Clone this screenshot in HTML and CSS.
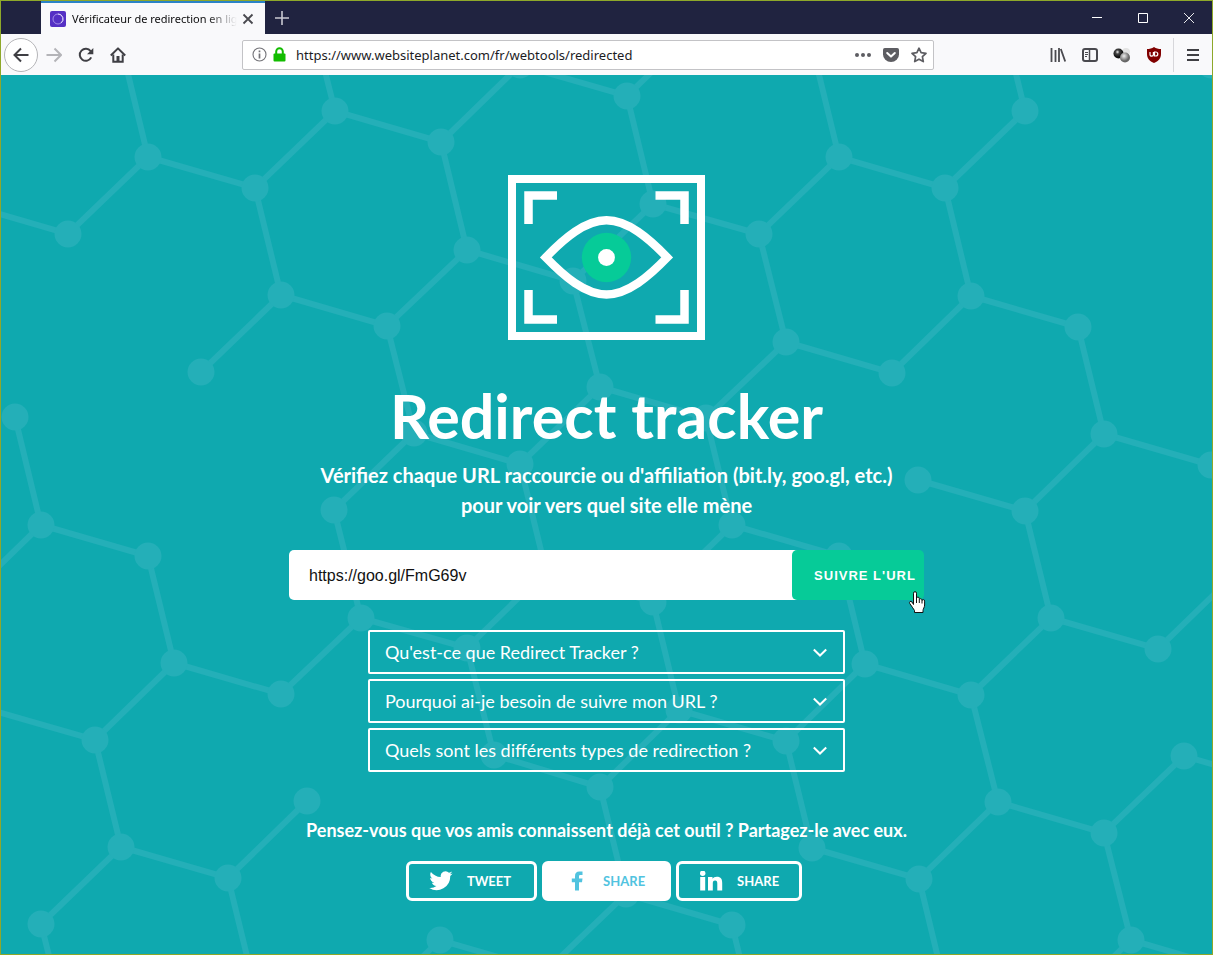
FILE: index.html
```html
<!DOCTYPE html>
<html lang="fr">
<head>
    <meta charset="UTF-8">
    <meta name="viewport" content="width=device-width, initial-scale=1.0">
    <title>Vérificateur de redirection en ligne</title>
    <link rel="stylesheet" href="styles.css">
</head>
<body>
    <div class="window">
        <div class="titlebar">
            <div class="tab">
                <svg class="favicon" width="16" height="16" viewBox="0 0 16 16">
                    <rect width="16" height="16" rx="2" fill="#5530c4"/>
                    <circle cx="8" cy="8" r="5" fill="none" stroke="#a48ce8" stroke-width="1"/>
                    <path d="M8 3a5 5 0 0 1 3 9" fill="none" stroke="#ddd4fa" stroke-width="1"/>
                </svg>
                <span class="tab-title">Vérificateur de redirection en ligne</span>
                <button class="tab-close" aria-label="Fermer l'onglet">
                    <svg width="12" height="12" viewBox="0 0 12 12"><path d="M1.500 1.500l9 9m0-9l-9 9" stroke="#4a4a4f" stroke-width="1.800"/></svg>
                </button>
            </div>
            <button class="new-tab" aria-label="Nouvel onglet">
                <svg width="14" height="14" viewBox="0 0 14 14"><path d="M7 0v14M0 7h14" stroke="#c9c9d1" stroke-width="1.600"/></svg>
            </button>
            <div class="window-controls">
                <button aria-label="Réduire"><svg width="12" height="12" viewBox="0 0 12 12"><path d="M1 5.500h10" stroke="#fff"/></svg></button>
                <button aria-label="Agrandir"><svg width="12" height="12" viewBox="0 0 12 12"><path d="M1.500 1.500h9v9h-9z" fill="none" stroke="#fff"/></svg></button>
                <button aria-label="Fermer"><svg width="12" height="12" viewBox="0 0 12 12"><path d="M1 1l10 10M11 1L1 11" stroke="#fff" stroke-width="0.900"/></svg></button>
            </div>
        </div>

        <div class="toolbar">
            <div class="nav-buttons">
                <button class="back" aria-label="Précédent">
                    <svg width="16" height="16" viewBox="0 0 16 16" fill="none" stroke="#3f3f44" stroke-width="2"><path d="M15.500 8H2M8 1.500L1.500 8 8 14.500"/></svg>
                </button>
                <button aria-label="Suivant">
                    <svg width="16" height="16" viewBox="0 0 16 16" fill="none" stroke="#b4b4b8" stroke-width="2"><path d="M.5 8H14M8.500 1.500L15 8l-6.500 6.500"/></svg>
                </button>
                <button aria-label="Actualiser">
                    <svg width="16" height="16" viewBox="0 0 16 16"><path d="M13.200 10.400A6 6 0 1 1 12.600 4.200" fill="none" stroke="#3f3f44" stroke-width="2"/><path d="M15.300 1v6.300H9z" fill="#3f3f44"/></svg>
                </button>
                <button aria-label="Accueil">
                    <svg width="16" height="16" viewBox="0 0 16 16" fill="none" stroke="#3f3f44" stroke-width="2"><path d="M.8 8.500L8 1.400l7.200 7.100" stroke-linejoin="round"/><path d="M3.300 7.500v7.300h9.400V7.500"/><path d="M8 9v6" stroke-width="3"/></svg>
                </button>
            </div>
            <div class="url-bar">
                <svg width="15" height="15" viewBox="0 0 15 15"><circle cx="7.500" cy="7.500" r="6.500" fill="none" stroke="#737378" stroke-width="1.100"/><path d="M7.500 3.500v1.800M7.500 6.500V11.500" stroke="#737378" stroke-width="1.700"/></svg>
                <svg width="13" height="15" viewBox="0 0 13 15"><rect x=".5" y="6.500" width="12" height="8" rx="1" fill="#12bc00"/><path d="M3.200 7.500V4.500a3.300 3.300 0 0 1 6.600 0v3" fill="none" stroke="#12bc00" stroke-width="2"/></svg>
                <input class="url-input" type="text" aria-label="Adresse" value="https://www.websiteplanet.com/fr/webtools/redirected">
                <button aria-label="Actions de la page">
                    <svg width="16" height="16" viewBox="0 0 16 16" fill="#5d5d62"><circle cx="2" cy="8" r="2"/><circle cx="8" cy="8" r="2"/><circle cx="14" cy="8" r="2"/></svg>
                </button>
                <button aria-label="Pocket">
                    <svg width="16" height="16" viewBox="0 0 16 16"><path d="M1.800 1h12.400q1.800 0 1.800 1.800V7.500a8 7.500 0 0 1-16 0V2.800Q0 1 1.800 1z" fill="#5d5d62"/><path d="M4.200 6L8 9.600 11.800 6" fill="none" stroke="#fff" stroke-width="2" stroke-linecap="round" stroke-linejoin="round"/></svg>
                </button>
                <button aria-label="Marque-page">
                    <svg width="16" height="16" viewBox="0 0 16 16"><path d="M8 1.200l2.100 4.500 4.900.6-3.600 3.400.9 4.900L8 12.200l-4.300 2.400.9-4.900L1 6.300l4.900-.6z" fill="none" stroke="#5d5d62" stroke-width="1.700" stroke-linejoin="round"/></svg>
                </button>
            </div>
            <div class="tools">
                <button aria-label="Bibliothèque">
                    <svg width="16" height="16" viewBox="0 0 16 16" stroke="#4a4a4f" stroke-width="1.800"><path d="M1.500 1v14M5.500 3v12M9 1v14M10.800 2L15.200 14.500" fill="none"/></svg>
                </button>
                <button aria-label="Panneaux latéraux">
                    <svg width="16" height="14" viewBox="0 0 16 14" fill="none" stroke="#4a4a4f"><rect x="1" y="1" width="14" height="12" rx="2" stroke-width="2"/><path d="M7.500 1v12" stroke-width="1.500"/><path d="M3 4.500h3M3 6.500h3M3 8.500h2"/></svg>
                </button>
                <button aria-label="Extension">
                    <svg width="18" height="16" viewBox="0 0 18 16">
                        <defs>
                            <radialGradient id="dark" cx=".4" cy=".35"><stop offset="0" stop-color="#eee"/><stop offset=".4" stop-color="#444"/><stop offset="1" stop-color="#111"/></radialGradient>
                            <radialGradient id="grey" cx=".4" cy=".35"><stop offset="0" stop-color="#eee"/><stop offset="1" stop-color="#666"/></radialGradient>
                        </defs>
                        <circle cx="13" cy="5" r="4" fill="#e3e3e3"/>
                        <circle cx="5.500" cy="6.500" r="5" fill="url(#dark)"/>
                        <circle cx="12" cy="10.500" r="5" fill="url(#grey)"/>
                    </svg>
                </button>
                <button aria-label="uBlock Origin">
                    <svg width="16" height="16" viewBox="0 0 16 16"><path d="M8 0c2 1.500 4.500 2 7 2v5c0 4.500-2.500 7-7 9-4.500-2-7-4.500-7-9V2c2.500 0 5-.5 7-2z" fill="#800000"/><path d="M4 5v2.500a1.700 1.700 0 0 0 3.400 0V5M8.500 5v4h1.300a2 2 0 0 0 0-4z" fill="none" stroke="#fff" stroke-width="1.200"/></svg>
                </button>
                <button class="menu" aria-label="Menu">
                    <svg width="14" height="14" viewBox="0 0 14 14"><path d="M1 2h12M1 7h12M1 12h12" stroke="#3f3f44" stroke-width="2"/></svg>
                </button>
            </div>
        </div>

        <main class="hero">
            <!-- molecule pattern -->
            <svg class="pattern" viewBox="1 75 1211 879" preserveAspectRatio="xMidYMin slice" aria-hidden="true">
                <g fill="none" stroke="#24afb8" stroke-width="6">
                    <path d="M122 49L148 157 255 188 335 111 441 142 467 250 387 326 281 295 255 188M308 4L335 111M148 157L68 234-38 203M441 142L520 65 627 96 706 19M627 96L653 204 759 234M653 204L573 281 467 250M281 295L201 372"/>
                    <path d="M387 326L414 433 334 510 361 618 467 648 546 571 520 464 414 433M573 281L600 387 520 464M600 387L706 418 786 342 759 234 839 157 945 188 971 296 892 373 786 342M813 50L839 157M945 188L1025 111 999 4M971 296L1078 327 1104 434 1025 511 918 480M1104 434L1211 465"/>
                    <path d="M15 417L41 525-38 602M41 525L148 556 174 663 281 694 361 618M174 663L95 740-12 709M95 740L121 847 228 878 307 801M121 847L41 924 68 1031M228 878L254 985"/>
                    <path d="M546 571L653 602 732 525 706 418M732 525L839 556 865 664 786 741 679 710 653 602M467 648L494 755 600 787 679 710M600 787L626 894 732 925 758 1032M626 894L546 971 440 940 360 1017M786 741L812 848 919 879 998 802 971 695 865 664M971 695L1051 618 1025 511M1051 618L1158 649 1237 572M998 802L1104 833 1184 756 1290 787M1104 833L1131 940 1237 971M1131 940L1051 1017M919 879L945 987"/>
                </g>
                <!-- zero-length round caps draw the atoms -->
                <path fill="none" stroke="#24afb8" stroke-width="27" stroke-linecap="round" d="M148 157h0M68 234h0M255 188h0M335 111h0M441 142h0M467 250h0M281 295h0M387 326h0M201 372h0M15 417h0M41 525h0M148 556h0M174 663h0M281 694h0M95 740h0M121 847h0M228 878h0M41 924h0M307 801h0M361 618h0M334 510h0M414 433h0M520 464h0M467 648h0M494 755h0M600 787h0M520 65h0M627 96h0M653 204h0M759 234h0M573 281h0M600 387h0M706 418h0M546 571h0M653 602h0M732 525h0M679 710h0M786 741h0M839 556h0M865 664h0M971 695h0M812 848h0M919 879h0M998 802h0M1051 618h0M1025 511h0M918 480h0M1158 649h0M1104 833h0M1184 756h0M1131 940h0M1104 434h0M1211 465h0M1078 327h0M971 296h0M892 373h0M786 342h0M839 157h0M945 188h0M1025 111h0M626 894h0M732 925h0M440 940h0M1211 65h0"/>
            </svg>

            <div class="content">
                <svg class="eye" width="197" height="165" viewBox="0 0 197 165" fill="none" stroke="#fff" aria-hidden="true">
                    <rect x="4" y="4" width="189" height="157" stroke-width="8"/>
                    <path d="M20.500 49V20.500H49M147.500 20.500H176.500V49M20.500 115V144.500H49M147.500 144.500H176.500V115" stroke-width="8.500"/>
                    <circle cx="98.500" cy="82.500" r="24.700" fill="#06cb98" stroke="none"/>
                    <circle cx="98.500" cy="82.500" r="8.400" fill="#fff" stroke="none"/>
                    <path d="M37.800 82.400C56 63.500 77 45.300 98.500 45.300S141 63.500 159.200 82.400C141 101.300 120 119.500 98.500 119.500S56 101.300 37.800 82.400z" stroke-width="8.500"/>
                </svg>
                <h1>Redirect tracker</h1>
                <p class="subtitle">Vérifiez chaque URL raccourcie ou d'affiliation (bit.ly, goo.gl, etc.)<br>pour voir vers quel site elle mène</p>

                <form class="track-form" onsubmit="return false">
                    <input type="text" aria-label="URL à suivre" value="https://goo.gl/FmG69v">
                    <button type="submit">SUIVRE L'URL</button>
                    <svg class="cursor" width="18" height="23" viewBox="0 0 18 23" aria-hidden="true"><path d="M5.500 13.500V2.200a1.500 1.500 0 0 1 3 0V8.200V7.500a1.400 1.400 0 0 1 2.800 0v1.200a1.400 1.400 0 0 1 2.700.2v.9a1.300 1.300 0 0 1 2.600.3V14c0 2.500-1.600 3.800-1.600 5.500v2H6.500v-2C5.200 17.500 3.500 15 1.800 12.600.7 10.800 2.700 9.600 4 11zM8.500 8v4M11.300 9v3M14 10v2.500" fill="#fff" stroke="#111"/></svg>
                </form>

                <div class="faq">
                    <button aria-expanded="false"><span>Qu'est-ce que Redirect Tracker ?</span><svg width="14" height="9" viewBox="0 0 14 9"><path d="M.8 1.500L7 7.500l6.200-6"/></svg></button>
                    <button aria-expanded="false"><span>Pourquoi ai-je besoin de suivre mon URL ?</span><svg width="14" height="9" viewBox="0 0 14 9"><path d="M.8 1.500L7 7.500l6.200-6"/></svg></button>
                    <button aria-expanded="false"><span>Quels sont les différents types de redirection ?</span><svg width="14" height="9" viewBox="0 0 14 9"><path d="M.8 1.500L7 7.500l6.200-6"/></svg></button>
                </div>

                <p class="share-text">Pensez-vous que vos amis connaissent déjà cet outil ? Partagez-le avec eux.</p>
                <div class="share">
                    <a href="#">
                        <svg width="24" height="20" viewBox="0 0 24 20"><path d="M23.600 2.400c-.9.400-1.800.6-2.700.8 1-.6 1.700-1.500 2.100-2.600-.9.500-1.900.9-3 1.200a4.800 4.800 0 0 0-8.200 4.300C7.800 5.900 4.300 4 1.900 1 .6 3.200 1.300 6 3.400 7.400c-.8 0-1.500-.2-2.200-.6 0 2.300 1.600 4.300 3.900 4.800-.7.200-1.400.2-2.200.1.600 1.900 2.400 3.300 4.500 3.300A9.600 9.600 0 0 1 .3 17 13.600 13.600 0 0 0 21.200 4.900c1-.7 1.800-1.500 2.400-2.500z"/></svg>
                        TWEET
                    </a>
                    <a href="#" class="active">
                        <svg width="24" height="20" viewBox="0 0 24 20"><path d="M10 19.500V11.300H6.800V7.500H10V5.200C10 2 11.500.5 14.300.5H17.500V4h-2c-1.300 0-1.500.6-1.500 1.600v1.900H17.500L17 11.300h-3v8.200z"/></svg>
                        SHARE
                    </a>
                    <a href="#">
                        <svg width="24" height="20" viewBox="0 0 24 20"><circle cx="3.700" cy="2.200" r="2.700"/><path d="M1.200 6h5v13.500h-5zM9 6h4.500v1.800C14.300 6.500 15.800 5.700 17.800 5.700c4.200 0 5.400 2.300 5.400 6.300v7.500h-4.900v-7c0-1.800-.5-3-2.200-3-1.800 0-2.300 1.200-2.300 3v7H9z"/></svg>
                        SHARE
                    </a>
                </div>
            </div>
        </main>
    </div>
</body>
</html>
```

FILE: styles.css
```css
* {
    box-sizing: border-box;
}
body {
    margin: 0;
    font-family: Lato, sans-serif;
    background-color: #0fa9af;
}
button {
    border: none;
    padding: 0;
    background: none;
    cursor: pointer;
}
svg {
    display: block;
    flex-shrink: 0;
}
.window {
    display: flex;
    flex-direction: column;
    min-height: 100vh;
    border: 1px solid #8ea82a;
}

/* Browser chrome */
.titlebar {
    display: flex;
    height: 33px;
    padding-left: 40px;
    background-color: #202340;
}
.tab {
    display: flex;
    align-items: center;
    width: 224px;
    padding: 0 11px 0 9px;
    border-top: 2px solid #2b83c6;
    background-color: #f9f9fb;
}
.tab-title {
    flex: 1;
    min-width: 0;
    margin: 0 5px 0 6px;
    overflow: hidden;
    white-space: nowrap;
    font-family: "Noto Sans", sans-serif;
    font-size: 11px;
    color: #0c0c0d;
    -webkit-mask-image: linear-gradient(to left, transparent, #000 30px);
    mask-image: linear-gradient(to left, transparent, #000 30px);
}
.new-tab {
    padding: 0 10px;
}
.window-controls {
    display: flex;
    margin-left: auto;
}
.window-controls button {
    width: 46px;
    padding-left: 17px;
}
.toolbar {
    display: flex;
    align-items: center;
    height: 41px;
    padding: 0 3px;
    background-color: #f9f9fb;
}
.nav-buttons,
.tools {
    display: flex;
    align-items: center;
}
.nav-buttons button,
.tools button {
    display: flex;
    align-items: center;
    justify-content: center;
    width: 32px;
    height: 34px;
}
.nav-buttons .back {
    width: 34px;
    border: 1px solid #b5b5b8;
    border-radius: 50%;
    background-color: #fff;
}
.tools .menu {
    width: 36px;
    margin-left: 3px;
    padding-left: 2px;
    border-left: 1px solid #d7d7db;
}
.url-bar {
    display: flex;
    flex: 1;
    align-items: center;
    gap: 6px;
    height: 30px;
    margin: 0 108px;
    padding: 0 6px 0 9px;
    border: 1px solid #c3c3c6;
    border-radius: 2px;
    background-color: #fff;
}
.url-bar button {
    margin-left: 6px;
}
.url-input {
    flex: 1;
    min-width: 0;
    padding: 0 0 0 4px;
    border: none;
    outline: none;
    font-family: "Noto Sans", sans-serif;
    font-size: 13px;
    color: #1c1c1f;
}

/* Page */
.hero {
    position: relative;
    flex: 1;
    overflow: hidden;
    background-color: #0fa9af;
    color: #fff;
}
.pattern {
    position: absolute;
    top: 0;
    left: 0;
    width: 100%;
    height: 100%;
}
.content {
    position: relative;
    display: flex;
    flex-direction: column;
    align-items: center;
    padding: 100px 20px 50px;
}
h1 {
    margin: 40px 0 8px;
    font-size: 61px;
    font-weight: 700;
    line-height: 72px;
}
.subtitle {
    margin: 0 0 30px;
    text-align: center;
    font-size: 20px;
    font-weight: 700;
    line-height: 30px;
}
.track-form {
    position: relative;
    display: flex;
    width: 100%;
    max-width: 635px;
    height: 50px;
    font-family: "Liberation Sans", Arial, sans-serif;
}
.track-form input {
    flex: 1;
    min-width: 0;
    margin-right: -5px;
    padding: 2px 20px 0;
    border: none;
    outline: none;
    border-radius: 5px 0 0 5px;
    background-color: #fff;
    font-family: inherit;
    font-size: 16px;
    color: #111;
}
.track-form button {
    min-width: 132px;
    padding: 0 6px 0 20px;
    border-radius: 5px;
    background-color: #06cb98;
    color: #fff;
    font-family: inherit;
    font-size: 13px;
    font-weight: 700;
    letter-spacing: 1px;
}
.cursor {
    position: absolute;
    right: -2px;
    bottom: -14px;
}
.faq {
    display: flex;
    flex-direction: column;
    gap: 5px;
    width: 100%;
    max-width: 477px;
    margin-top: 30px;
}
.faq button {
    display: flex;
    align-items: center;
    justify-content: space-between;
    height: 44px;
    padding: 0 16px 0 15px;
    border: 2px solid #fff;
    border-radius: 2px;
    color: #fff;
    font-family: inherit;
    font-size: 18px;
    text-align: left;
}
.faq path {
    fill: none;
    stroke: #fff;
    stroke-width: 2;
}
.share-text {
    margin: 45px 0 18px;
    text-align: center;
    font-size: 18px;
    font-weight: 700;
    line-height: 26px;
}
.share {
    display: flex;
}
.share a {
    display: flex;
    align-items: center;
    gap: 14px;
    height: 40px;
    margin-right: 5px;
    padding: 0 23px 0 20px;
    border: 3px solid #fff;
    border-radius: 6px;
    color: #fff;
    font-size: 13px;
    font-weight: 700;
    text-decoration: none;
}
.share a:last-child {
    padding-right: 20px;
}
.share .active {
    background-color: #fff;
    color: #51c3df;
}
.share svg {
    fill: currentColor;
}
```
